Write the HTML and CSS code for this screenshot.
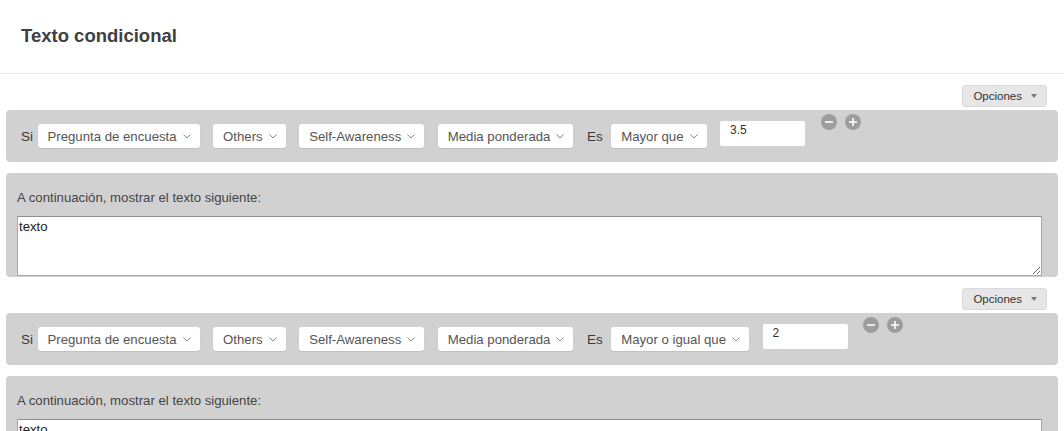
FILE: index.html
```html
<!DOCTYPE html>
<html lang="es">
<head>
    <meta charset="UTF-8">
    <title>Texto condicional</title>
    <link rel="stylesheet" href="styles.css">
</head>
<body>
    <header class="page-header">
        <h1>Texto condicional</h1>
    </header>

    <div class="rules">
        <!-- Regla 1 -->
        <section class="rule">
            <div class="rule-toolbar">
                <button class="options-btn">Opciones <span class="caret"></span></button>
            </div>
            <div class="condition">
                <span class="word word-if">Si</span>
                <div class="select">Pregunta de encuesta <svg class="chev" viewBox="0 0 8 5"><polyline points="0.5,0.5 4,4 7.5,0.5"/></svg></div>
                <div class="select">Others <svg class="chev" viewBox="0 0 8 5"><polyline points="0.5,0.5 4,4 7.5,0.5"/></svg></div>
                <div class="select">Self-Awareness <svg class="chev" viewBox="0 0 8 5"><polyline points="0.5,0.5 4,4 7.5,0.5"/></svg></div>
                <div class="select">Media ponderada <svg class="chev" viewBox="0 0 8 5"><polyline points="0.5,0.5 4,4 7.5,0.5"/></svg></div>
                <span class="word word-is">Es</span>
                <div class="select">Mayor que <svg class="chev" viewBox="0 0 8 5"><polyline points="0.5,0.5 4,4 7.5,0.5"/></svg></div>
                <input class="value-input" type="text" value="3.5">
                <div class="row-actions">
                    <svg class="round-btn" viewBox="0 0 16 16"><circle cx="8" cy="8" r="8"/><line x1="4" y1="8" x2="12" y2="8"/></svg>
                    <svg class="round-btn" viewBox="0 0 16 16"><circle cx="8" cy="8" r="8"/><line x1="4" y1="8" x2="12" y2="8"/><line x1="8" y1="4" x2="8" y2="12"/></svg>
                </div>
            </div>
            <div class="result">
                <label class="result-label">A continuación, mostrar el texto siguiente:</label>
                <textarea class="result-text">texto</textarea>
            </div>
        </section>

        <!-- Regla 2 -->
        <section class="rule">
            <div class="rule-toolbar">
                <button class="options-btn">Opciones <span class="caret"></span></button>
            </div>
            <div class="condition">
                <span class="word word-if">Si</span>
                <div class="select">Pregunta de encuesta <svg class="chev" viewBox="0 0 8 5"><polyline points="0.5,0.5 4,4 7.5,0.5"/></svg></div>
                <div class="select">Others <svg class="chev" viewBox="0 0 8 5"><polyline points="0.5,0.5 4,4 7.5,0.5"/></svg></div>
                <div class="select">Self-Awareness <svg class="chev" viewBox="0 0 8 5"><polyline points="0.5,0.5 4,4 7.5,0.5"/></svg></div>
                <div class="select">Media ponderada <svg class="chev" viewBox="0 0 8 5"><polyline points="0.5,0.5 4,4 7.5,0.5"/></svg></div>
                <span class="word word-is">Es</span>
                <div class="select">Mayor o igual que <svg class="chev" viewBox="0 0 8 5"><polyline points="0.5,0.5 4,4 7.5,0.5"/></svg></div>
                <input class="value-input" type="text" value="2">
                <div class="row-actions">
                    <svg class="round-btn" viewBox="0 0 16 16"><circle cx="8" cy="8" r="8"/><line x1="4" y1="8" x2="12" y2="8"/></svg>
                    <svg class="round-btn" viewBox="0 0 16 16"><circle cx="8" cy="8" r="8"/><line x1="4" y1="8" x2="12" y2="8"/><line x1="8" y1="4" x2="8" y2="12"/></svg>
                </div>
            </div>
            <div class="result">
                <label class="result-label">A continuación, mostrar el texto siguiente:</label>
                <textarea class="result-text">texto</textarea>
            </div>
        </section>
    </div>
</body>
</html>
```

FILE: styles.css
```css
:root {
    --panel-bg: #d1d1d1;
    --text-color: #333;
    --muted: #555;
}

* {
    margin: 0;
    padding: 0;
    box-sizing: border-box;
}

body {
    font-family: 'Liberation Sans', Helvetica, Arial, sans-serif;
    font-size: 13px;
    color: var(--text-color);
    background: #fff;
}

/* Header */
.page-header {
    height: 74px;
    display: flex;
    align-items: center;
    padding: 0 21px 2px;
    border-bottom: 1px solid #e8e8e8;
}

.page-header h1 {
    font-size: 18.5px;
    font-weight: bold;
    color: #404040;
}

/* Rules */
.rules {
    padding: 0 6px;
}

.rule-toolbar {
    display: flex;
    justify-content: flex-end;
    padding-right: 11px;
    margin-top: 11px;
    margin-bottom: 3px;
}

.options-btn {
    display: flex;
    align-items: center;
    gap: 9px;
    height: 22px;
    padding: 0 9px 0 10px;
    font-family: inherit;
    font-size: 11.5px;
    color: #333;
    background: #e6e6e6;
    border: 1px solid #dadada;
    border-radius: 3px;
}

.caret {
    width: 0;
    height: 0;
    border-left: 3.5px solid transparent;
    border-right: 3.5px solid transparent;
    border-top: 4px solid #777;
}

.condition {
    height: 52px;
    display: flex;
    align-items: center;
    gap: 13.5px;
    padding-left: 15px;
    background: var(--panel-bg);
    border-radius: 4px;
}

.word {
    font-size: 13.5px;
    color: #3a3a3a;
}

.word-if {
    margin-right: -9px;
}

.word-is {
    margin-right: -5px;
}

.select {
    height: 24px;
    display: flex;
    align-items: center;
    gap: 6px;
    padding: 1px 9px 0 10px;
    background: #fff;
    border-radius: 3px;
    box-shadow: 0 1px 1px rgba(0, 0, 0, 0.08);
    font-size: 13.2px;
    color: var(--muted);
    white-space: nowrap;
}

.chev {
    width: 8px;
    height: 5px;
    fill: none;
    stroke: #888;
    stroke-width: 1;
}

.value-input {
    width: 85px;
    height: 25px;
    margin-top: -5px;
    padding: 0 10px 7px;
    border: none;
    border-radius: 2px;
    background: #fff;
    font-family: inherit;
    font-size: 12px;
    color: #333;
    outline: none;
}

.row-actions {
    align-self: flex-start;
    display: flex;
    gap: 8px;
    margin-top: 4px;
    margin-left: 2px;
}

.round-btn {
    width: 16px;
    height: 16px;
}

.round-btn circle {
    fill: #9d9d9d;
}

.round-btn line {
    stroke: #fff;
    stroke-width: 1.6;
}

/* Result text */
.result {
    margin-top: 11px;
    padding: 17px 16px 1px 11px;
    background: var(--panel-bg);
    border-radius: 4px;
}

.result-label {
    display: block;
    font-size: 13.2px;
    line-height: 16px;
    color: #444;
    margin-bottom: 10px;
}

.result-text {
    display: block;
    width: 100%;
    height: 60px;
    padding: 2px 1px;
    border: 1px solid #a9a9a9;
    border-top-color: #8e8e8e;
    font-family: inherit;
    font-size: 13.2px;
    color: #222;
    background: #fff;
}
```
